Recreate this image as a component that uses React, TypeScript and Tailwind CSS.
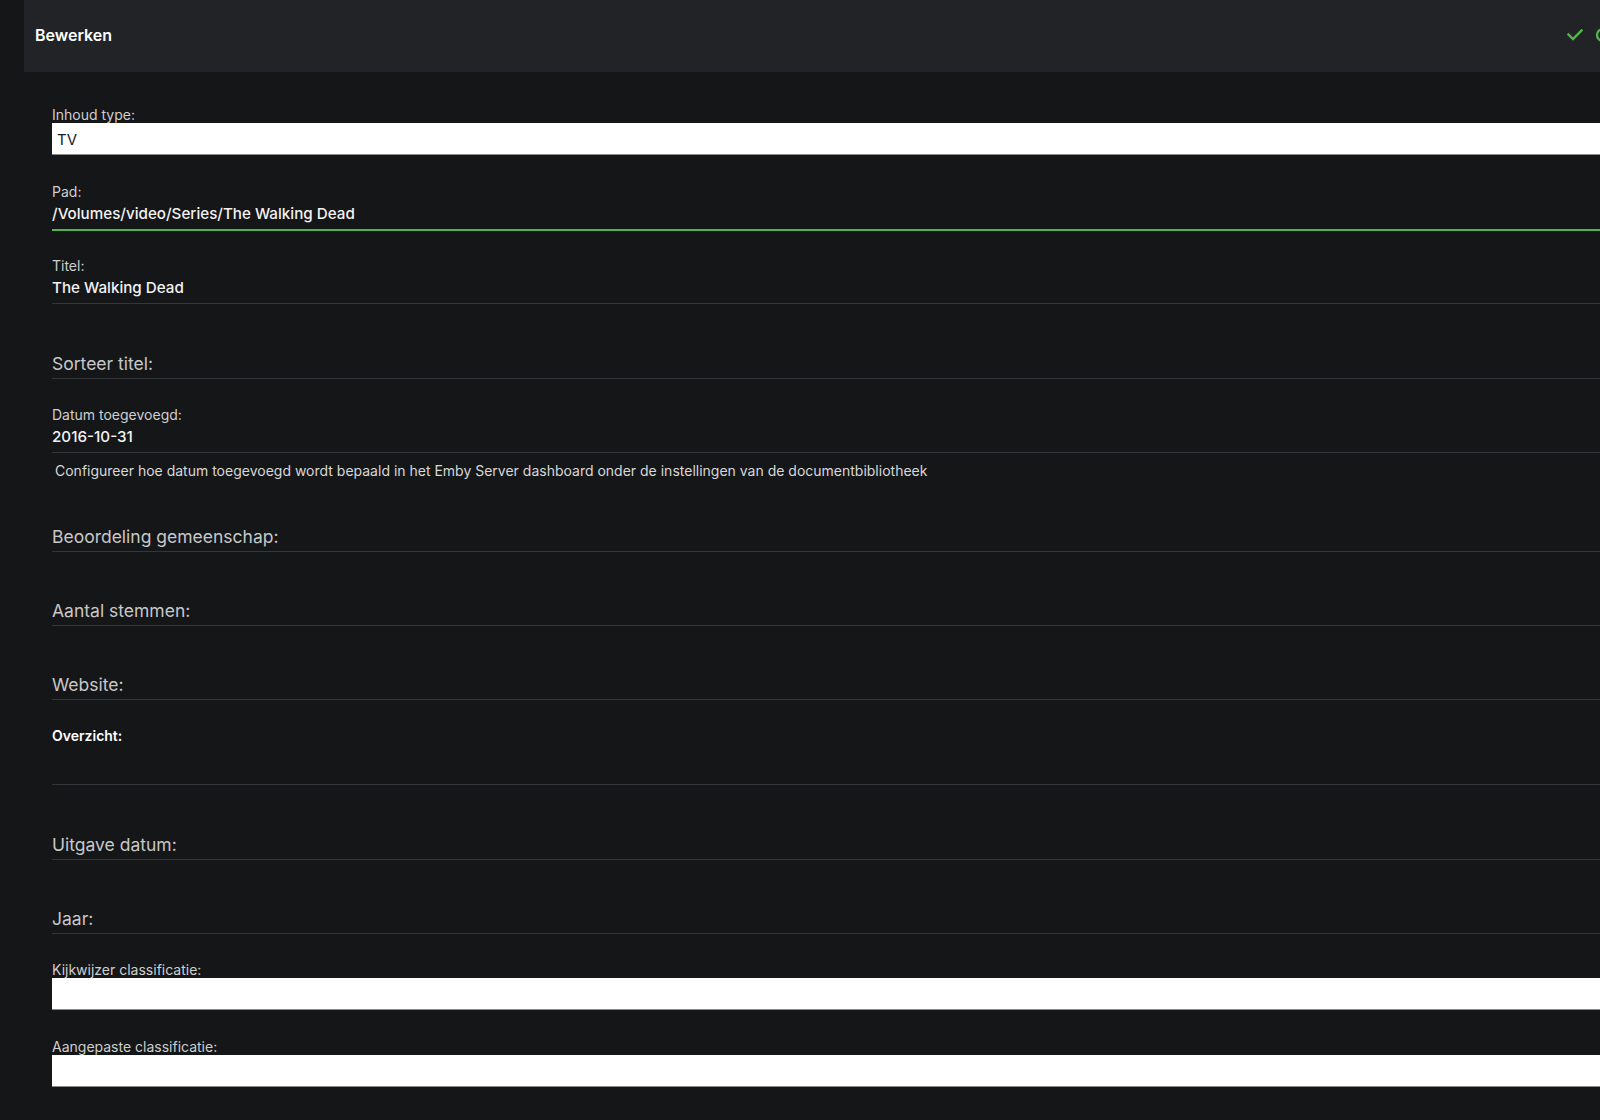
import React from 'react';

const font = { fontFamily: 'Inter, "Noto Sans", sans-serif' };

interface TextFieldProps {
  label: string;
  value?: string;
  focused?: boolean;
}

// Filled field: small label on top, value above the line. Empty field: big label sits on the line.
const TextField: React.FC<TextFieldProps> = ({ label, value, focused }) => {
  if (!value) {
    return (
      <div className="h-[46px] flex flex-col justify-end border-b border-[#35363a] pb-[3px]">
        <div className="text-[17.5px] leading-[22px] text-[#c8c8c8]">{label}</div>
      </div>
    );
  }
  return (
    <div
      className={
        focused
          ? 'h-[47px] flex flex-col border-b-2 border-[#52b54b]'
          : 'h-[46px] flex flex-col border-b border-[#35363a]'
      }
    >
      <div className="text-[14px] leading-4 text-[#cfcfcf]">{label}</div>
      <div className="mt-[3px] text-[15.2px] leading-[22px] font-medium text-[#f2f2f2]">{value}</div>
    </div>
  );
};

interface SelectFieldProps {
  label: string;
  value?: string;
}

const SelectField: React.FC<SelectFieldProps> = ({ label, value }) => {
  return (
    <div>
      <div className="text-[14px] leading-4 text-[#cfcfcf]">{label}</div>
      <div className="h-[32px] bg-white border-b border-[#8a8a8a] flex items-center px-[5px] pt-[3px] text-[15px] text-[#1a1a1a]">
        {value}
      </div>
    </div>
  );
};

const App: React.FC = () => {
  return (
    <div className="w-[1600px] h-[1120px] overflow-hidden flex bg-[#151618]" style={font}>
      <div className="w-6 shrink-0 bg-[#151618]" />
      <div className="w-[1640px] shrink-0 flex flex-col">
        <header className="h-[72px] bg-[#222327] flex items-center justify-between pl-[11px] pr-[53px] pb-[3px]">
          <h1 className="text-[16px] font-semibold text-white">Bewerken</h1>
          <div className="flex items-center">
            <svg width="16" height="12" viewBox="0 0 16 12" fill="none" stroke="#52b54b" strokeWidth="2.4" strokeLinecap="square">
              <path d="M1.5 5.5 L6 10 L14.5 1.5" />
            </svg>
            <svg className="ml-[12px]" width="16" height="16" viewBox="0 0 16 16" fill="none" stroke="#52b54b" strokeWidth="2.4">
              <circle cx="8" cy="8" r="6" />
            </svg>
          </div>
        </header>

        <div className="pl-[28px] pt-[35px]">
          <SelectField label="Inhoud type:" value="TV" />

          <div className="mt-[29px]">
            <TextField label="Pad:" value="/Volumes/video/Series/The Walking Dead" focused />
          </div>
          <div className="mt-[27px]">
            <TextField label="Titel:" value="The Walking Dead" />
          </div>
          <div className="mt-[29px]">
            <TextField label="Sorteer titel:" />
          </div>
          <div className="mt-[28px]">
            <TextField label="Datum toegevoegd:" value="2016-10-31" />
          </div>
          <p className="mt-[8px] ml-[3px] text-[14px] leading-5 text-[#d8d8d8]">
            Configureer hoe datum toegevoegd wordt bepaald in het Emby Server dashboard onder de instellingen van de documentbibliotheek
          </p>

          <div className="mt-[25px]">
            <TextField label="Beoordeling gemeenschap:" />
          </div>
          <div className="mt-[28px]">
            <TextField label="Aantal stemmen:" />
          </div>
          <div className="mt-[28px]">
            <TextField label="Website:" />
          </div>

          <div className="mt-[28px] h-[57px] border-b border-[#35363a]">
            <div className="text-[14px] leading-4 font-semibold text-white">Overzicht:</div>
          </div>

          <div className="mt-[29px]">
            <TextField label="Uitgave datum:" />
          </div>
          <div className="mt-[28px]">
            <TextField label="Jaar:" />
          </div>

          <div className="mt-[28px]">
            <SelectField label="Kijkwijzer classificatie:" />
          </div>
          <div className="mt-[29px]">
            <SelectField label="Aangepaste classificatie:" />
          </div>
        </div>
      </div>
    </div>
  );
};

export default App;
